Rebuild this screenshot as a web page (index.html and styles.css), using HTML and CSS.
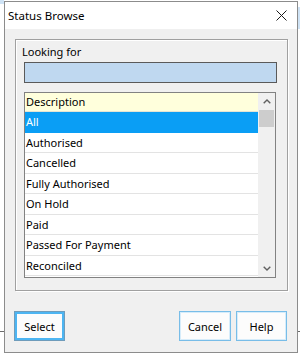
FILE: index.html
```html
<!DOCTYPE html>
<html>
<head>
<meta charset="utf-8">
<link rel="stylesheet" href="styles.css">
</head>
<body>
<div class="win">
  <div class="titlebar">
    <span class="title">Status Browse</span>
    <svg class="close" width="11" height="11" viewBox="0 0 11 11"><path d="M0.5 0.5 L10.5 10.5 M10.5 0.5 L0.5 10.5" stroke="#1a1a1a" stroke-width="1" fill="none"/></svg>
  </div>
  <div class="client">
    <div class="group">
      <div class="label">Looking for</div>
      <div class="input"></div>
      <div class="list">
        <div class="rows">
          <div class="head">Description</div>
          <div class="row sel">All</div>
          <div class="row">Authorised</div>
          <div class="row">Cancelled</div>
          <div class="row">Fully Authorised</div>
          <div class="row">On Hold</div>
          <div class="row">Paid</div>
          <div class="row">Passed For Payment</div>
          <div class="row last">Reconciled</div>
        </div>
        <div class="scrollbar">
          <div class="arrow"><svg width="8" height="5" viewBox="0 0 8 5"><path d="M0.7 4.3 L4 1 L7.3 4.3" stroke="#606060" stroke-width="1.4" fill="none"/></svg></div>
          <div class="thumb"></div>
          <div class="track"></div>
          <div class="arrow"><svg width="8" height="5" viewBox="0 0 8 5"><path d="M0.7 0.7 L4 4 L7.3 0.7" stroke="#606060" stroke-width="1.4" fill="none"/></svg></div>
        </div>
      </div>
    </div>
    <div class="buttons">
      <button class="btn default w51">Select</button>
      <span class="spacer"></span>
      <button class="btn w52">Cancel</button>
      <button class="btn w51">Help</button>
    </div>
  </div>
</div>
</body>
</html>
```

FILE: styles.css
```css
html, body {
  margin: 0;
  padding: 0;
}
body {
  width: 300px;
  height: 355px;
  overflow: hidden;
  background-color: #ffffff;
  background-image:
    linear-gradient(#cfe3f5, #cfe3f5),
    linear-gradient(#cfe3f5, #cfe3f5),
    linear-gradient(#6a6a6a, #6a6a6a),
    linear-gradient(#6a6a6a, #6a6a6a);
  background-size: 4px 4px, 3px 22px, 4px 1px, 3px 1px;
  background-position: 0 0, 297px 7px, 0 331px, 297px 331px;
  background-repeat: no-repeat;
  font-family: "Noto Sans", "Open Sans", sans-serif;
  padding-top: 1px;
  box-sizing: border-box;
}
.win {
  margin-left: 4px;
  width: 294px;
  height: 352px;
  box-sizing: border-box;
  border: 1px solid #8c8c8c;
  display: flex;
  flex-direction: column;
  background: #f0f0f0;
}
.titlebar {
  height: 27px;
  flex: none;
  background: #ffffff;
  display: flex;
  align-items: center;
  justify-content: space-between;
  padding: 0 10px 0 3px;
}
.title {
  font-size: 11.5px;
  color: #000;
  line-height: 16px;
}
.close {
  display: block;
}
.client {
  flex: 1;
  padding: 10px 10px 0 9px;
  display: flex;
  flex-direction: column;
}
.group {
  margin-left: 1px;
  width: 273px;
  height: 252px;
  box-sizing: border-box;
  border: 1px solid #a0a0a0;
  box-shadow: inset 1px 1px 0 #ffffff, 1px 1px 0 #ffffff;
  padding: 0 0 0 8px;
}
.label {
  font-size: 11px;
  line-height: 14px;
  height: 22px;
  box-sizing: border-box;
  padding-top: 5px;
  margin-left: -2px;
  color: #000;
}
.input {
  width: 253px;
  height: 21px;
  box-sizing: border-box;
  border: 1px solid #5a5a5a;
  background: #bfd8f0;
}
.list {
  margin-top: 9px;
  width: 252px;
  height: 186px;
  box-sizing: border-box;
  border: 1px solid #828282;
  background: #ffffff;
  display: flex;
  overflow: hidden;
}
.rows {
  flex: 1;
  display: flex;
  flex-direction: column;
}
.head {
  height: 19px;
  box-sizing: border-box;
  background: #ffffdc;
  border-bottom: 1px solid #e4e4d4;
  font-size: 11px;
  line-height: 18px;
  padding-left: 1px;
  color: #000;
}
.row {
  height: 20.5px;
  flex: none;
  box-sizing: border-box;
  border-bottom: 1px solid #e3e3e3;
  font-size: 11px;
  line-height: 19px;
  padding-left: 1px;
  color: #000;
}
.row.sel {
  background: #0a9ef5;
  color: #ffffff;
  border-bottom-color: #0a9ef5;
}
.scrollbar {
  width: 17px;
  flex: none;
  background: #f0f0f0;
  display: flex;
  flex-direction: column;
}
.arrow {
  height: 17px;
  flex: none;
  display: flex;
  align-items: center;
  justify-content: center;
}
.arrow svg {
  display: block;
}
.thumb {
  height: 17px;
  margin: 0 1px;
  background: #cdcdcd;
  flex: none;
}
.track {
  flex: 1;
}
.buttons {
  margin-top: 20px;
  display: flex;
  gap: 5px;
}
.spacer {
  flex: 1;
}
.btn {
  height: 30px;
  box-sizing: border-box;
  font-family: "Noto Sans", "Open Sans", sans-serif;
  font-size: 11px;
  color: #000;
  background: #fcfcfc;
  border: 1px solid #78bde8;
  box-shadow: inset 0 0 0 1px #d6ecfa;
  padding: 0;
  margin: 0;
}
.btn.default {
  border: 1px solid #6f9cbb;
  box-shadow: inset 0 0 0 1px #4db5f2, inset 0 0 0 2px #4db5f2;
}
.w51 { width: 51px; }
.w52 { width: 52px; }
```
